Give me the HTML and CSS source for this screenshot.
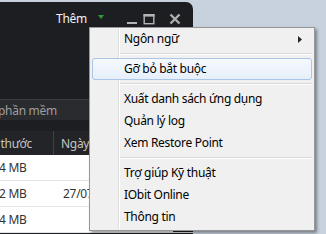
FILE: index.html
```html
<!DOCTYPE html>
<html lang="vi">
<head>
<meta charset="utf-8">
<title>Menu</title>
<link rel="stylesheet" href="styles.css">
</head>
<body>
<div class="desk">
  <div class="window">
    <div class="titlebar">
      <span class="more">Thêm</span>
      <svg class="caret" width="8" height="6" viewBox="0 0 8 6"><path d="M1 1h6L4 5z" fill="#2f9b3c"/></svg>
      <svg class="ctl ctl-min" width="12" height="12" viewBox="0 0 12 12"><rect x="1" y="9" width="10" height="2" fill="#b4b4b4"/></svg>
      <svg class="ctl ctl-max" width="12" height="12" viewBox="0 0 12 12"><rect x="1.2" y="1.7" width="9.6" height="9" fill="none" stroke="#b4b4b4" stroke-width="1.4"/><rect x="0.5" y="1" width="11" height="2.6" fill="#b4b4b4"/></svg>
      <svg class="ctl ctl-close" width="12" height="12" viewBox="0 0 12 12"><path d="M1.5 1.5L10.5 10.5M10.5 1.5L1.5 10.5" stroke="#b0b0b0" stroke-width="2.3"/></svg>
    </div>
    <div class="search"><span class="search-text">phần mềm</span></div>
    <div class="list">
      <div class="head">
        <div class="cell c1"><span class="clip">Kích thước</span></div>
        <div class="cell c2">Ngày</div>
        <div class="cell c3"></div>
      </div>
      <div class="row">
        <div class="cell c1">4 MB</div>
        <div class="cell c2"></div>
        <div class="cell c3"></div>
      </div>
      <div class="row">
        <div class="cell c1">2 MB</div>
        <div class="cell c2">27/07</div>
        <div class="cell c3"></div>
      </div>
      <div class="row">
        <div class="cell c1">4 MB</div>
        <div class="cell c2"></div>
        <div class="cell c3"></div>
      </div>
    </div>
  </div>
</div>
<div class="menu">
  <div class="item has-sub">Ngôn ngữ<svg class="sub" width="4" height="7" viewBox="0 0 4 7"><path d="M0 0L4 3.5L0 7z" fill="#262626"/></svg></div>
  <div class="sep"></div>
  <div class="item hot">Gỡ bỏ bắt buộc</div>
  <div class="sep"></div>
  <div class="item">Xuất danh sách ứng dụng</div>
  <div class="item">Quản lý log</div>
  <div class="item">Xem Restore Point</div>
  <div class="sep"></div>
  <div class="item">Trợ giúp Kỹ thuật</div>
  <div class="item">IObit Online</div>
  <div class="item">Thông tin</div>
</div>
</body>
</html>
```

FILE: styles.css
```css
html, body {
  margin: 0;
  padding: 0;
}
body {
  width: 326px;
  height: 234px;
  overflow: hidden;
  position: relative;
  background: #c8d2df;
  font-family: "Noto Sans", "Open Sans", sans-serif;
  font-size: 12px;
  letter-spacing: -0.3px;
}
.desk {
  padding-top: 2px;
}
.window {
  width: 193px;
  height: 250px;
  background: #1c1e21;
  border-top-right-radius: 7px;
  display: flex;
  flex-direction: column;
  overflow: hidden;
}
.titlebar {
  height: 34px;
  display: flex;
  align-items: center;
  justify-content: flex-end;
  padding-right: 12px;
}
.more {
  color: #f2f2f2;
  line-height: 16px;
}
.caret {
  margin-left: 10px;
  margin-top: -4px;
}
.ctl {
  display: block;
}
.ctl-min { margin-left: 21px; }
.ctl-max { margin-left: 5px; }
.ctl-close { margin-left: 14px; }

.search {
  margin-top: 63px;
  height: 21px;
  background: #292b2e;
  border-top: 1px solid #3a3c40;
  box-sizing: border-box;
  display: flex;
  align-items: center;
  overflow: hidden;
}
.search-text {
  color: #9e9e9e;
  margin-left: -2px;
  white-space: nowrap;
}
.list {
  margin-top: 11px;
  display: flex;
  flex-direction: column;
}
.head {
  height: 24px;
  background: #222427;
  display: grid;
  grid-template-columns: 54px 1fr 20px;
  color: #c4c4c4;
}
.head .c1 {
  border-right: 1px solid #3f4144;
  overflow: hidden;
  position: relative;
}
.clip {
  position: absolute;
  right: 21px;
  white-space: nowrap;
}
.head .c2 {
  padding-left: 7px;
}
.cell {
  display: flex;
  align-items: center;
  white-space: nowrap;
}
.row {
  height: 26px;
  box-sizing: border-box;
  border-bottom: 1px solid #e3e3e3;
  display: grid;
  grid-template-columns: 55px 1fr 20px;
  background: #ffffff;
  color: #333333;
}
.row .c1 {
  margin-left: -1px;
}
.row .c2 {
  padding-left: 8px;
}
.row .c3, .head .c3 {
  background: #1c1e21;
}

.menu {
  position: absolute;
  left: 89px;
  top: 27px;
  width: 226px;
  box-sizing: border-box;
  border: 1px solid #979797;
  background: #f0f0f0;
  padding: 0 2px 2px 2px;
  box-shadow: 2px 2px 3px rgba(0, 0, 0, 0.4);
  color: #000;
}
.menu::before {
  content: "";
  position: absolute;
  left: 28px;
  top: 0;
  bottom: 0;
  width: 1px;
  background: #e0e0e0;
  border-right: 1px solid #ffffff;
}
.item {
  position: relative;
  height: 22px;
  line-height: 22px;
  padding-left: 32px;
  box-sizing: border-box;
  white-space: nowrap;
}
.has-sub {
  display: flex;
  align-items: center;
  justify-content: space-between;
  padding-right: 10px;
}
.hot {
  border: 1px solid #aac6e6;
  border-radius: 3px;
  background: linear-gradient(#f5f9fe, #e6effa);
  line-height: 20px;
  padding-left: 31px;
}
.sep {
  position: relative;
  height: 8px;
}
.sep::before {
  content: "";
  position: absolute;
  left: 28px;
  right: 0;
  top: 3px;
  height: 1px;
  background: #d9d9d9;
  border-bottom: 1px solid #ffffff;
}
```
